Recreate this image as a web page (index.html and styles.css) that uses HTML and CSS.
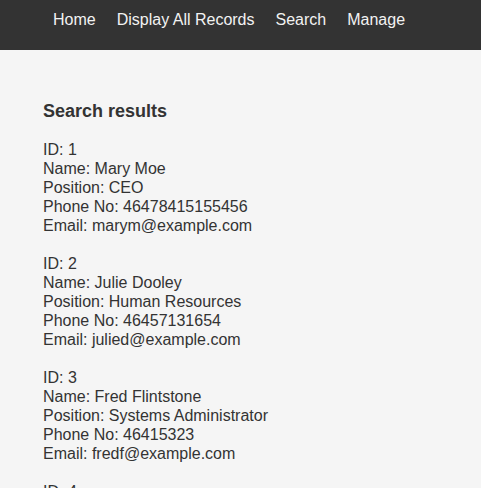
FILE: index.html
```html
<!DOCTYPE html>
<html>
<head>
<meta charset="utf-8">
<link rel="stylesheet" href="styles.css">
</head>
<body>
<nav class="topnav">
  <a href="#">Home</a>
  <a href="#">Display All Records</a>
  <a href="#">Search</a>
  <a href="#">Manage</a>
</nav>
<main class="content">
  <h3 class="title">Search results</h3>
  <div class="record">ID: 1<br>Name: Mary Moe<br>Position: CEO<br>Phone No: 46478415155456<br>Email: marym@example.com</div>
  <div class="record">ID: 2<br>Name: Julie Dooley<br>Position: Human Resources<br>Phone No: 46457131654<br>Email: julied@example.com</div>
  <div class="record">ID: 3<br>Name: Fred Flintstone<br>Position: Systems Administrator<br>Phone No: 46415323<br>Email: fredf@example.com</div>
  <div class="record">ID: 4<br>Name: Barney Rubble<br>Position: Developer<br>Phone No: 4641234<br>Email: barneyr@example.com</div>
</main>
</body>
</html>
```
FILE: styles.css
```css
html, body {
  margin: 0;
  padding: 0;
  background: #f5f5f5;
  font-family: "Liberation Sans", Arial, sans-serif;
  color: #333;
}
.topnav {
  background: #333;
  height: 50px;
  box-sizing: border-box;
  padding: 10px 0 0 53px;
  display: flex;
  gap: 21px;
}
.topnav a {
  color: #f2f2f2;
  text-decoration: none;
  font-size: 16px;
  line-height: 19px;
}
.content {
  padding: 0 43px;
}
.title {
  font-size: 18px;
  line-height: 21px;
  margin: 51px 0 18px;
  font-weight: bold;
}
.record {
  font-size: 16px;
  line-height: 19px;
  margin-bottom: 19px;
}
```
